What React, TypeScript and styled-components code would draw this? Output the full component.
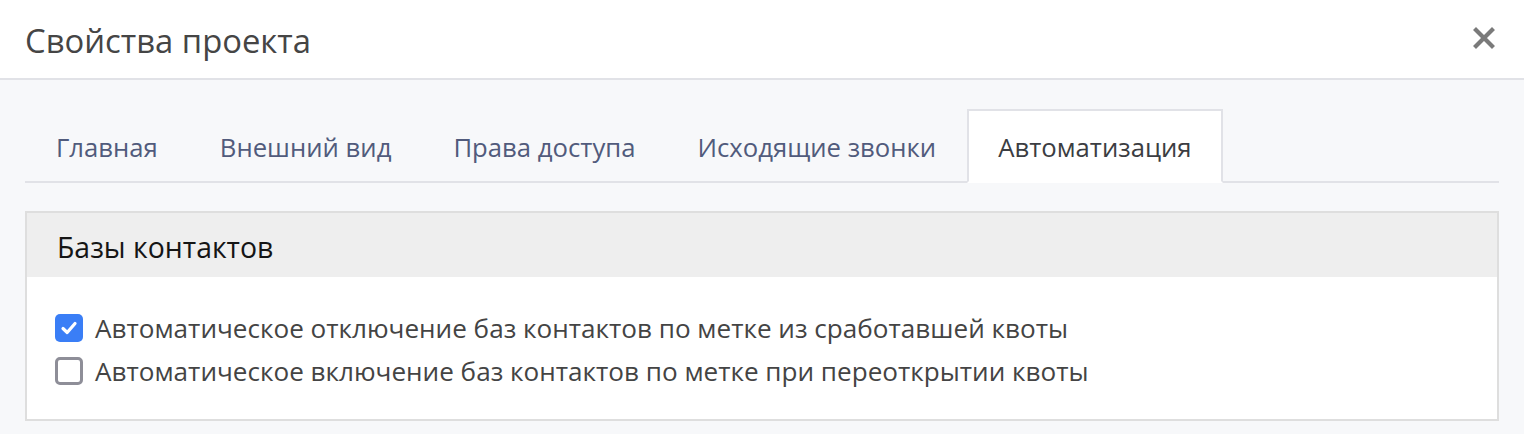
import * as React from 'react';
import styled, { createGlobalStyle } from 'styled-components';

const GlobalStyle = createGlobalStyle`
  html, body {
    margin: 0;
    padding: 0;
    background: #f7f8fa;
    font-family: "Open Sans", "Noto Sans", sans-serif;
  }
  * {
    box-sizing: border-box;
  }
`;

const Modal = styled.div`
  width: 1524px;
  height: 434px;
  background: #f7f8fa;
  display: flex;
  flex-direction: column;
  overflow: hidden;
`;

const Header = styled.div`
  height: 80px;
  flex-shrink: 0;
  background: #ffffff;
  border-bottom: 2px solid #e1e2e7;
  display: flex;
  align-items: center;
  justify-content: space-between;
  padding: 3px 28px 0 25px;
`;

const Title = styled.h1`
  margin: 0;
  font-size: 32.8px;
  font-weight: 400;
  color: #454545;
`;

const CloseButton = styled.button`
  border: none;
  background: none;
  padding: 0;
  width: 24px;
  height: 24px;
  display: flex;
  align-items: center;
  justify-content: center;
  cursor: pointer;
  margin-top: -6px;
`;

const Body = styled.div`
  padding: 29px 25px 0 25px;
  display: flex;
  flex-direction: column;
  gap: 28px;
`;

const TabList = styled.div`
  display: flex;
  border-bottom: 2px solid #e1e2e7;
  height: 74px;
`;

const Tab = styled.div<{ $active?: boolean }>`
  display: flex;
  align-items: center;
  padding: 3px 29px 0 29px;
  margin-bottom: -2px;
  font-size: 25.7px;
  color: ${(p) => (p.$active ? '#3b3d42' : '#515b7c')};
  background: ${(p) => (p.$active ? '#ffffff' : 'transparent')};
  border: 2px solid ${(p) => (p.$active ? '#e1e2e7' : 'transparent')};
  border-bottom-color: ${(p) => (p.$active ? '#ffffff' : 'transparent')};
  white-space: nowrap;
`;

const Panel = styled.div`
  border: 2px solid #dedede;
  background: #ffffff;
`;

const PanelHeader = styled.div`
  height: 64px;
  background: #eeeeee;
  display: flex;
  align-items: center;
  padding: 4px 30px 0 30px;
  font-size: 28.4px;
  color: #151515;
`;

const PanelBody = styled.div`
  padding: 37px 28px 34px 28px;
  display: flex;
  flex-direction: column;
  gap: 15px;
`;

const CheckRow = styled.label`
  display: flex;
  align-items: center;
  gap: 12px;
  font-size: 26.1px;
  color: #444444;
  line-height: 28px;
`;

const Box = styled.span<{ $checked?: boolean }>`
  width: 28px;
  height: 28px;
  border-radius: 5px;
  flex-shrink: 0;
  display: flex;
  align-items: center;
  justify-content: center;
  background: ${(p) => (p.$checked ? '#3a7ef6' : '#ffffff')};
  border: ${(p) => (p.$checked ? 'none' : '3px solid #8e8e98')};
`;

const CloseIcon = () => (
  <svg width="22" height="22" viewBox="0 0 22 22">
    <path d="M3 3 L19 19 M19 3 L3 19" stroke="#7a7a7a" strokeWidth="4.2" strokeLinecap="square" />
  </svg>
);

const CheckIcon = () => (
  <svg width="20" height="20" viewBox="0 0 20 20">
    <path d="M4 10.5 L8.2 14.5 L16 5.5" fill="none" stroke="#ffffff" strokeWidth="3.2" strokeLinecap="round" strokeLinejoin="round" />
  </svg>
);

const tabs = ['Главная', 'Внешний вид', 'Права доступа', 'Исходящие звонки', 'Автоматизация'];

const options = [
  { label: 'Автоматическое отключение баз контактов по метке из сработавшей квоты', checked: true },
  { label: 'Автоматическое включение баз контактов по метке при переоткрытии квоты', checked: false },
];

export default function App() {
  return (
    <>
      <GlobalStyle />
      <Modal>
        <Header>
          <Title>Свойства проекта</Title>
          <CloseButton aria-label="Закрыть">
            <CloseIcon />
          </CloseButton>
        </Header>
        <Body>
          <TabList>
            {tabs.map((t, i) => (
              <Tab key={t} $active={i === tabs.length - 1}>
                {t}
              </Tab>
            ))}
          </TabList>
          <Panel>
            <PanelHeader>Базы контактов</PanelHeader>
            <PanelBody>
              {options.map((o) => (
                <CheckRow key={o.label}>
                  <Box $checked={o.checked}>{o.checked && <CheckIcon />}</Box>
                  {o.label}
                </CheckRow>
              ))}
            </PanelBody>
          </Panel>
        </Body>
      </Modal>
    </>
  );
}
